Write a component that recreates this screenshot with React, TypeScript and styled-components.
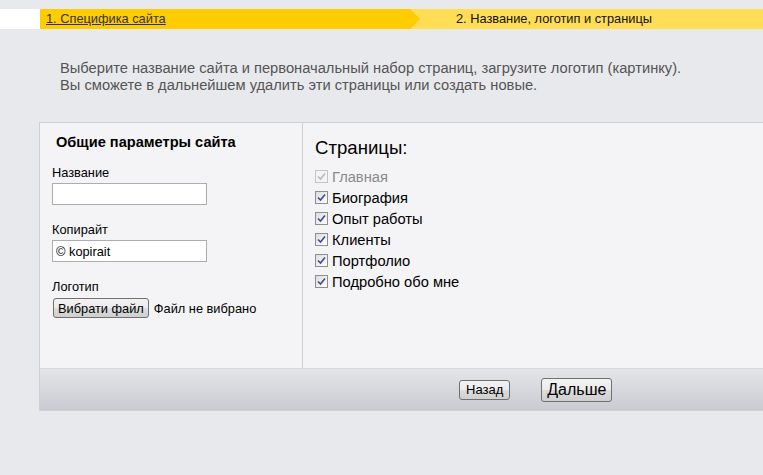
import React from "react";
import styled, { createGlobalStyle } from "styled-components";

const Global = createGlobalStyle`
  html, body { margin: 0; padding: 0; background: #e8e9ec; }
  body { font-family: "Liberation Sans", Arial, sans-serif; color: #000; }
  * { box-sizing: border-box; }
`;

const Page = styled.div`
  width: 763px;
  height: 475px;
  overflow: hidden;
  background: #e8e9ec;
  padding-top: 9px;
`;

const Steps = styled.div`
  display: flex;
  height: 20px;
  background: #fff;
  padding-left: 40px;
`;

const StepDone = styled.div`
  position: relative;
  width: 370px;
  background: #ffcc00;
  font-size: 12.8px;
  line-height: 20px;
  padding-left: 6px;
  z-index: 1;
  &::after {
    content: "";
    position: absolute;
    right: -10px;
    top: 0;
    border-top: 10px solid transparent;
    border-bottom: 10px solid transparent;
    border-left: 10px solid #ffcc00;
  }
`;

const StepLink = styled.a`
  color: #333;
  text-decoration: underline;
  cursor: pointer;
`;

const StepCurrent = styled.div`
  flex: 1;
  background: #ffdd55;
  font-size: 12.8px;
  line-height: 20px;
  color: #111;
  padding-left: 46px;
`;

const Intro = styled.p`
  margin: 0;
  padding: 31px 0 0 60px;
  font-size: 14.7px;
  line-height: 17px;
  color: #555;
`;

const Panel = styled.div`
  margin: 28px 0 0 39px;
  border: 1px solid #cfd0d4;
  border-right: none;
  background: #f4f4f6;
`;

const Body = styled.div`
  display: grid;
  grid-template-columns: 263px 1fr;
  height: 245px;
`;

const LeftCol = styled.div`
  border-right: 1px solid #cfd0d4;
  padding: 11px 0 0 12px;
`;

const Title = styled.div`
  font-size: 14.6px;
  font-weight: bold;
  padding-left: 4px;
  line-height: 16px;
  margin-bottom: 16px;
`;

const Field = styled.div`
  display: flex;
  flex-direction: column;
  margin-bottom: 18px;
`;

const Label = styled.label`
  font-size: 12.8px;
  line-height: 14px;
  margin-bottom: 3px;
`;

const TextInput = styled.input`
  width: 155px;
  height: 22px;
  border: 1px solid #abadb3;
  background: #fff;
  font-family: "Liberation Sans", Arial, sans-serif;
  font-size: 12.8px;
  padding: 0 3px;
  outline: none;
`;

const FileRow = styled.div`
  display: flex;
  align-items: center;
  gap: 5px;
  margin-top: 1px;
`;

const FileButton = styled.button`
  height: 20px;
  padding: 0 4px;
  margin-left: 1px;
  border: 1px solid #707070;
  border-radius: 3px;
  background: linear-gradient(#f2f2f2 0%, #ebebeb 50%, #dddddd 51%, #cfcfcf 100%);
  font-family: "Liberation Sans", Arial, sans-serif;
  font-size: 12.8px;
  color: #000;
`;

const FileText = styled.span`
  font-size: 12.8px;
`;

const RightCol = styled.div`
  padding: 14px 0 0 12px;
`;

const PagesTitle = styled.div`
  font-size: 18.6px;
  line-height: 22px;
  margin-bottom: 7px;
`;

const CheckRow = styled.label<{ $disabled?: boolean }>`
  display: flex;
  align-items: center;
  gap: 4px;
  height: 21px;
  font-size: 14.7px;
  color: ${(p) => (p.$disabled ? "#8a8a8a" : "#000")};
`;

const Box = styled.span<{ $disabled?: boolean }>`
  width: 13px;
  height: 13px;
  border: 1px solid ${(p) => (p.$disabled ? "#c4c4c4" : "#8e8f8f")};
  background: ${(p) =>
    p.$disabled ? "#f4f4f4" : "linear-gradient(135deg, #dcdcdc, #ffffff)"};
  display: flex;
  align-items: center;
  justify-content: center;
`;

const Footer = styled.div`
  height: 42px;
  border-top: 1px solid #d8d9dd;
  background: linear-gradient(#e4e5e8, #c9cbd2);
  display: flex;
  align-items: center;
  padding-left: 419px;
  gap: 31px;
`;

const NavButton = styled.button<{ $big?: boolean }>`
  height: ${(p) => (p.$big ? "24px" : "20px")};
  padding: ${(p) => (p.$big ? "0 5px" : "0 6px")};
  border: 1px solid #707070;
  border-radius: 3px;
  background: linear-gradient(#f2f2f2 0%, #ebebeb 50%, #dddddd 51%, #cfcfcf 100%);
  font-family: "Liberation Sans", Arial, sans-serif;
  font-size: ${(p) => (p.$big ? "16px" : "13px")};
  color: #000;
`;

const pages = [
  { name: "Главная", disabled: true },
  { name: "Биография" },
  { name: "Опыт работы" },
  { name: "Клиенты" },
  { name: "Портфолио" },
  { name: "Подробно обо мне" },
];

function Check({ disabled }: { disabled?: boolean }) {
  return (
    <Box $disabled={disabled}>
      <svg width="9" height="9" viewBox="0 0 9 9">
        <path
          d="M1 4.5 L3.5 7 L8 1.5"
          fill="none"
          stroke={disabled ? "#b8b8b8" : "#3c4f8c"}
          strokeWidth="1.6"
        />
      </svg>
    </Box>
  );
}

export default function App() {
  return (
    <Page>
      <Global />
      <Steps>
        <StepDone>
          <StepLink>1. Специфика сайта</StepLink>
        </StepDone>
        <StepCurrent>2. Название, логотип и страницы</StepCurrent>
      </Steps>
      <Intro>
        Выберите название сайта и первоначальный набор страниц, загрузите логотип (картинку).
        <br />
        Вы сможете в дальнейшем удалить эти страницы или создать новые.
      </Intro>
      <Panel>
        <Body>
          <LeftCol>
            <Title>Общие параметры сайта</Title>
            <Field>
              <Label>Название</Label>
              <TextInput defaultValue="" />
            </Field>
            <Field>
              <Label>Копирайт</Label>
              <TextInput defaultValue="© kopirait" />
            </Field>
            <Field>
              <Label>Логотип</Label>
              <FileRow>
                <FileButton>Вибрати файл</FileButton>
                <FileText>Файл не вибрано</FileText>
              </FileRow>
            </Field>
          </LeftCol>
          <RightCol>
            <PagesTitle>Страницы:</PagesTitle>
            {pages.map((p) => (
              <CheckRow key={p.name} $disabled={p.disabled}>
                <Check disabled={p.disabled} />
                {p.name}
              </CheckRow>
            ))}
          </RightCol>
        </Body>
        <Footer>
          <NavButton>Назад</NavButton>
          <NavButton $big>Дальше</NavButton>
        </Footer>
      </Panel>
    </Page>
  );
}
